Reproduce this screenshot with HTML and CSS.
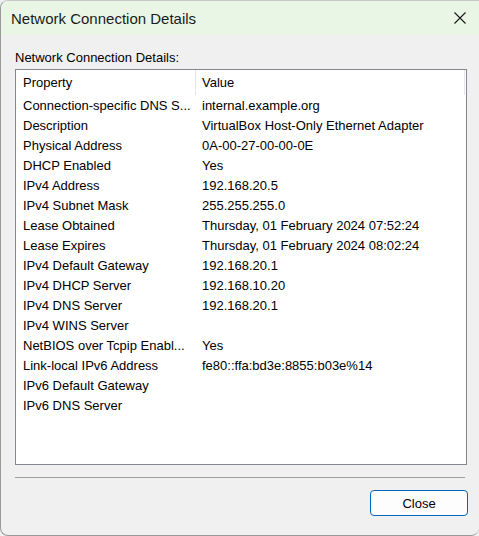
FILE: index.html
```html
<!DOCTYPE html>
<html>
<head>
<meta charset="utf-8">
<link rel="stylesheet" href="styles.css">
</head>
<body>
<div class="window">
  <div class="titlebar">
    <span class="title">Network Connection Details</span>
    <svg class="close-x" width="12" height="12" viewBox="0 0 12 12"><path d="M0.5 0.5 L11.5 11.5 M11.5 0.5 L0.5 11.5" stroke="#1a1a1a" stroke-width="1.1" fill="none"/></svg>
  </div>
  <div class="content">
    <div class="label">Network Connection Details:</div>
    <div class="listbox">
      <div class="row header">
        <div class="c1">Property</div>
        <div class="c2">Value</div>
      </div>
      <div class="row"><div class="c1">Connection-specific DNS S...</div><div class="c2">internal.example.org</div></div>
      <div class="row"><div class="c1">Description</div><div class="c2">VirtualBox Host-Only Ethernet Adapter</div></div>
      <div class="row"><div class="c1">Physical Address</div><div class="c2">0A-00-27-00-00-0E</div></div>
      <div class="row"><div class="c1">DHCP Enabled</div><div class="c2">Yes</div></div>
      <div class="row"><div class="c1">IPv4 Address</div><div class="c2">192.168.20.5</div></div>
      <div class="row"><div class="c1">IPv4 Subnet Mask</div><div class="c2">255.255.255.0</div></div>
      <div class="row"><div class="c1">Lease Obtained</div><div class="c2">Thursday, 01 February 2024 07:52:24</div></div>
      <div class="row"><div class="c1">Lease Expires</div><div class="c2">Thursday, 01 February 2024 08:02:24</div></div>
      <div class="row"><div class="c1">IPv4 Default Gateway</div><div class="c2">192.168.20.1</div></div>
      <div class="row"><div class="c1">IPv4 DHCP Server</div><div class="c2">192.168.10.20</div></div>
      <div class="row"><div class="c1">IPv4 DNS Server</div><div class="c2">192.168.20.1</div></div>
      <div class="row"><div class="c1">IPv4 WINS Server</div><div class="c2"></div></div>
      <div class="row"><div class="c1">NetBIOS over Tcpip Enabl...</div><div class="c2">Yes</div></div>
      <div class="row"><div class="c1">Link-local IPv6 Address</div><div class="c2">fe80::ffa:bd3e:8855:b03e%14</div></div>
      <div class="row"><div class="c1">IPv6 Default Gateway</div><div class="c2"></div></div>
      <div class="row"><div class="c1">IPv6 DNS Server</div><div class="c2"></div></div>
    </div>
    <div class="sep"></div>
    <div class="buttons">
      <button class="btn">Close</button>
    </div>
  </div>
</div>
</body>
</html>
```

FILE: styles.css
```css
* { box-sizing: border-box; }
html, body { margin: 0; padding: 0; background: #f0f0f0; }
body {
  font-family: "Liberation Sans", Arial, sans-serif;
  font-size: 13px;
  color: #000;
  width: 479px;
  height: 536px;
  overflow: hidden;
}
.window {
  width: 479px;
  height: 536px;
  background: #f0f0f0;
  border-left: 1px solid #9a9a9a;
  border-top: 1px solid #c8c8c8;
  border-bottom: 1px solid #9a9a9a;
  border-radius: 8px 0 8px 8px;
  overflow: hidden;
  display: flex;
  flex-direction: column;
}
.titlebar {
  height: 34px;
  background: #e9f6e6;
  display: flex;
  align-items: center;
  justify-content: space-between;
  padding: 0 13px 0 10px;
  flex-shrink: 0;
}
.title {
  font-size: 15px;
  color: #1b1b1b;
  padding-top: 1px;
}
.close-x { display: block; }
.content {
  padding: 14px 12px 0 14px;
  display: flex;
  flex-direction: column;
}
.label {
  line-height: 16px;
  height: 16px;
  padding-top: 1px;
  margin-bottom: 4px;
  color: #000;
}
.listbox {
  width: 452px;
  height: 396px;
  background: #fff;
  border: 1px solid #828790;
}
.row {
  display: flex;
  height: 20px;
  line-height: 20px;
  padding-top: 1px;
  white-space: nowrap;
}
.c1 {
  width: 180px;
  padding-left: 7px;
  overflow: hidden;
}
.c2 {
  padding-left: 6px;
  flex: 1;
}
.header {
  height: 25px;
  line-height: 25px;
  padding-top: 0;
}
.header .c1,
.header .c2 {
  padding-top: 1px;
  height: 25px;
  line-height: 24px;
}
.header .c1 {
  border-right: 1px solid #e5e5e5;
}
.header .c2 {
  width: 269px;
  flex: none;
  border-right: 1px solid #e5e5e5;
}
.sep {
  margin-top: 12px;
  width: 450px;
  height: 1px;
  background: #a0a0a0;
}
.buttons {
  display: flex;
  justify-content: flex-end;
  margin-top: 12px;
}
.btn {
  width: 98px;
  height: 26px;
  font-family: "Liberation Sans", Arial, sans-serif;
  font-size: 13px;
  color: #000;
  background: #fdfdfd;
  border: 1px solid #0067c0;
  border-radius: 4px;
  box-shadow: inset 0 0 0 1px #fdfdfd;
  padding: 0;
  margin-right: -1px;
}
```
